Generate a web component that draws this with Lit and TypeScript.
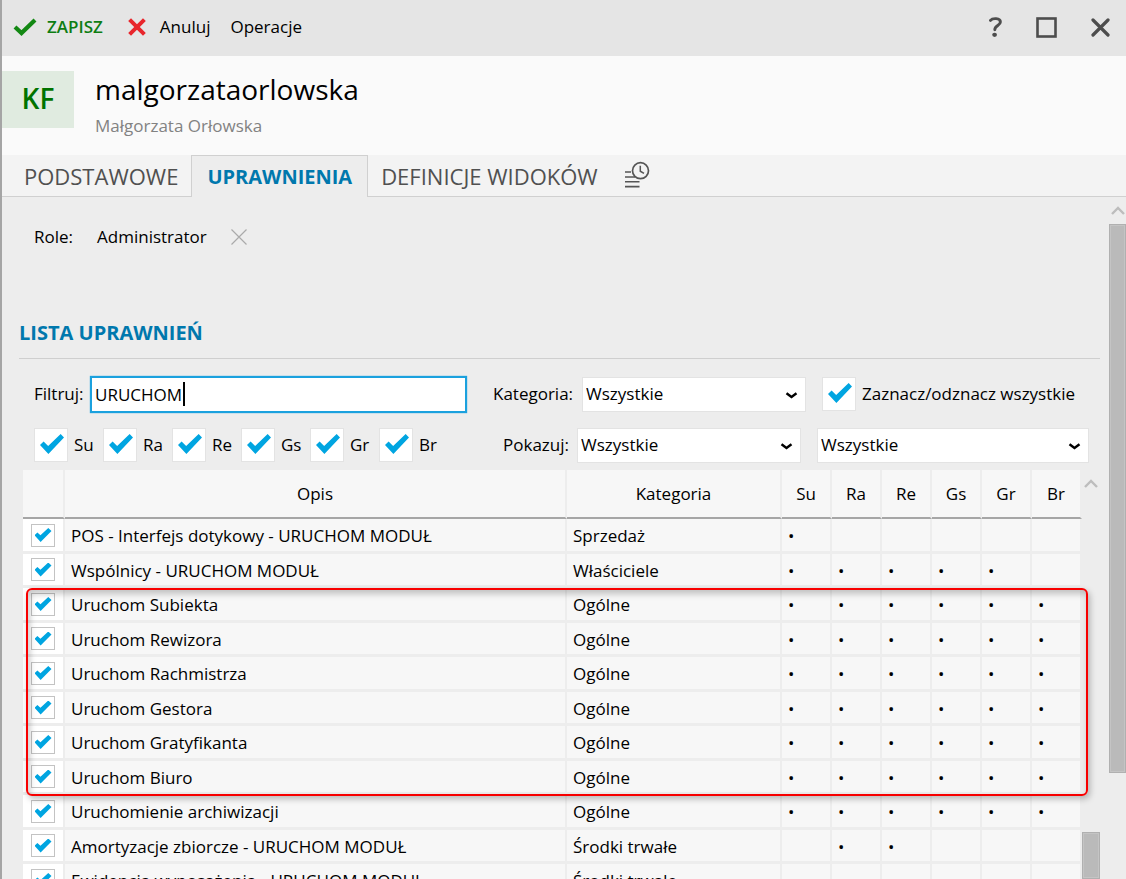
import { LitElement, html, css, svg } from "lit";
import { customElement, property, state } from "lit/decorators.js";

interface Permission {
  name: string;
  category: string;
  modules: string;
}

const MODULES = ["Su", "Ra", "Re", "Gs", "Gr", "Br"];

const PERMISSIONS: Permission[] = [
  { name: "POS - Interfejs dotykowy - URUCHOM MODUŁ", category: "Sprzedaż", modules: "Su" },
  { name: "Wspólnicy - URUCHOM MODUŁ", category: "Właściciele", modules: "Su Ra Re Gs Gr" },
  { name: "Uruchom Subiekta", category: "Ogólne", modules: "Su Ra Re Gs Gr Br" },
  { name: "Uruchom Rewizora", category: "Ogólne", modules: "Su Ra Re Gs Gr Br" },
  { name: "Uruchom Rachmistrza", category: "Ogólne", modules: "Su Ra Re Gs Gr Br" },
  { name: "Uruchom Gestora", category: "Ogólne", modules: "Su Ra Re Gs Gr Br" },
  { name: "Uruchom Gratyfikanta", category: "Ogólne", modules: "Su Ra Re Gs Gr Br" },
  { name: "Uruchom Biuro", category: "Ogólne", modules: "Su Ra Re Gs Gr Br" },
  { name: "Uruchomienie archiwizacji", category: "Ogólne", modules: "Su Ra Re Gs Gr Br" },
  { name: "Amortyzacje zbiorcze - URUCHOM MODUŁ", category: "Środki trwałe", modules: "Ra Re" },
  { name: "Ewidencja wyposażenia - URUCHOM MODUŁ", category: "Środki trwałe", modules: "" },
];

const controls = css`
  * {
    box-sizing: border-box;
  }
  button {
    display: inline-flex;
    align-items: center;
    padding: 0;
    border: 0;
    background: none;
    color: inherit;
    font: inherit;
  }
  svg {
    display: block;
    flex: none;
  }
  .tick {
    appearance: none;
    flex: none;
    display: grid;
    place-items: center;
    width: 34px;
    height: 34px;
    margin: 0;
    border: 1px solid #e3e3e3;
    background: #fff;
  }
  .tick:checked::before {
    content: "";
    width: 24px;
    height: 20px;
    margin: 0 0 2px 2px;
    background: #00a5e1;
    clip-path: polygon(0 55%, 15% 38%, 34% 60%, 86% 0, 100% 17%, 35% 100%);
  }
  .tick.small {
    width: 24px;
    height: 23px;
    border: 1px solid #c3c3c3;
  }
  .tick.small:checked::before {
    width: 17px;
    height: 14px;
    margin: 0;
    clip-path: polygon(0 52%, 17% 32%, 35% 51%, 81% 0, 100% 22%, 36% 100%);
  }
`;

@customElement("select-box")
export class SelectBox extends LitElement {
  @property() label = "";

  static styles = [
    controls,
    css`
      :host {
        display: block;
        position: relative;
        flex: none;
      }
      .select {
        appearance: none;
        display: block;
        width: 100%;
        height: 35px;
        padding: 0 32px 0 3px;
        border: 1px solid #e3e3e3;
        border-radius: 0;
        background: #fff;
        color: #000;
        font: inherit;
      }
      .arrow {
        position: absolute;
        right: 8px;
        top: 15px;
        pointer-events: none;
      }
    `,
  ];

  render() {
    return html`
      <select class="select" aria-label=${this.label}>
        <option>Wszystkie</option>
      </select>
      <svg class="arrow" width="13" height="8" viewBox="0 0 13 8">
        <path d="M1.5 1.2 L6.5 5 L11.5 1.2" fill="none" stroke="#000" stroke-width="2.4" />
      </svg>
    `;
  }
}

@customElement("app-root")
export class AppRoot extends LitElement {
  @state() private filter = "URUCHOM";

  static styles = [
    controls,
    css`
      :host {
        display: flex;
        flex-direction: column;
        height: 100vh;
        overflow: hidden;
        border-left: 2px solid #a5a5a5;
        box-sizing: border-box;
        background: #ededed;
        color: #000;
        font: 17px/24px "Open Sans", "Noto Sans", sans-serif;
      }
      .toolbar {
        display: flex;
        align-items: center;
        flex: none;
        height: 56px;
        padding: 0 16px 2px 11px;
        background: #e5e5e5;
      }
      .save {
        gap: 10px;
        margin-right: 25px;
        color: #0e7d12;
        font-weight: 600;
      }
      .cancel {
        gap: 14px;
        margin-right: 20px;
      }
      .window {
        display: flex;
        align-items: center;
        gap: 34px;
        margin-left: auto;
      }
      .heading {
        display: flex;
        flex: none;
        height: 99px;
        gap: 21px;
        padding-top: 15px;
        background: #fafafa;
      }
      .badge {
        display: grid;
        place-items: center;
        width: 72px;
        height: 57px;
        padding-bottom: 4px;
        background: #e0ebe0;
        color: #007300;
        font-size: 28px;
        font-weight: 600;
      }
      .login {
        margin: 0;
        font-size: 28px;
        line-height: 36px;
        font-weight: 400;
      }
      .person {
        margin: 7px 0 0;
        color: #828282;
      }
      .tabs {
        display: flex;
        flex: none;
        height: 42px;
        background: #f3f3f3;
        box-shadow: inset 0 -1px #d0d0d0;
        color: #505050;
        font-size: 22px;
      }
      .tab {
        padding: 0 13px;
      }
      .tab.first {
        padding-left: 22px;
      }
      .tab.active {
        padding: 0 15px;
        border: 1px solid #d0d0d0;
        border-bottom: 0;
        background: #ededed;
        color: #0078ad;
        font-size: 20px;
        font-weight: 700;
      }
      .tab.history {
        padding-bottom: 3px;
      }
      .body {
        display: flex;
        flex: 1;
        min-height: 0;
        gap: 9px;
      }
      .content {
        display: flex;
        flex-direction: column;
        flex: 1;
        min-width: 0;
        padding: 28px 0 0 17px;
      }
      .roles {
        display: flex;
        align-items: center;
        gap: 24px;
        height: 24px;
        padding-left: 15px;
      }
      .section {
        margin: 64px 0 0;
        padding: 6px 0 11px;
        border-bottom: 1px solid #cfcfcf;
        color: #0078ad;
        font-size: 20px;
        line-height: 28px;
        font-weight: 700;
      }
      .filters {
        display: flex;
        align-items: center;
        height: 36px;
        margin: 17px 11px 0 15px;
      }
      .filters.second {
        margin-top: 16px;
        height: 34px;
      }
      .search {
        display: flex;
        flex: 1;
        position: relative;
        margin: 0 26px 0 8px;
      }
      .text {
        flex: 1;
        min-width: 0;
        height: 37px;
        padding: 0 3px;
        border: 2px solid #1ba1de;
        outline: 0;
        background: #fff;
        box-shadow: 0 0 1px #1ba1de;
        color: #000;
        font: inherit;
        caret-color: transparent;
      }
      .caret {
        position: absolute;
        left: 93px;
        top: 6px;
        width: 2px;
        height: 24px;
        background: #000;
      }
      .label {
        flex: none;
        width: 48px;
      }
      .label.category {
        width: 89px;
      }
      .label.show {
        width: 74px;
      }
      .half {
        width: 224px;
        margin-right: 16px;
      }
      .wide {
        width: 272px;
      }
      .all {
        display: flex;
        align-items: center;
        gap: 6px;
        width: 267px;
      }
      .modules {
        display: flex;
        flex: 1;
      }
      .module {
        display: flex;
        align-items: center;
        gap: 6px;
        width: 69px;
      }
      .list {
        display: flex;
        flex: 1;
        min-height: 0;
        position: relative;
        margin-top: 8px;
        padding-left: 4px;
      }
      .rows {
        flex: 1;
        min-width: 0;
        overflow: hidden;
      }
      .table {
        width: 100%;
        table-layout: fixed;
        border-collapse: separate;
        border-spacing: 0;
      }
      .pick {
        width: 42px;
      }
      .kind {
        width: 215px;
      }
      .flag {
        width: 50px;
      }
      th {
        height: 49px;
        padding: 0;
        border-right: 2px solid #ededed;
        border-bottom: 2px solid #a6a6a6;
        background: #f7f7f7;
        font-weight: 400;
      }
      td {
        height: 35px;
        padding: 2px 6px 0;
        border-right: 2px solid #ededed;
        border-bottom: 3px solid #ededed;
        background: #f7f7f7;
        white-space: nowrap;
        line-height: 24px;
      }
      tr:nth-child(even) td {
        height: 34px;
      }
      td.box {
        padding: 0 8px;
        background: #fff;
      }
      .frame {
        position: absolute;
        left: 7px;
        right: 12px;
        top: 118px;
        height: 208px;
        border: 2px solid #f80000;
        border-radius: 6px;
        box-shadow: 2px 3px 6px rgba(0, 0, 0, 0.25), inset 2px 4px 6px rgba(0, 0, 0, 0.22);
        pointer-events: none;
      }
      .scroll {
        display: flex;
        flex-direction: column;
        align-items: center;
        flex: none;
        width: 18px;
        padding-top: 9px;
      }
      .scroll.page {
        width: 17px;
      }
      .thumb {
        width: 100%;
        border: 1px solid #b0b0b0;
        background: #bababa;
        box-shadow: inset 0 0 0 1px #c4c4c4;
      }
      .page .thumb {
        height: 549px;
        margin-top: 9px;
      }
      .list .thumb {
        flex: 1;
        margin-top: 344px;
      }
    `,
  ];

  private arrowUp() {
    return svg`<svg width="14" height="9" viewBox="0 0 14 9">
      <path d="M1 8 L7 2 L13 8" fill="none" stroke="#bdbdbd" stroke-width="2.4" />
    </svg>`;
  }

  private row(item: Permission) {
    const granted = item.modules.split(" ");
    return html`<tr>
      <td class="box"><input class="tick small" type="checkbox" aria-label=${item.name} checked /></td>
      <td>${item.name}</td>
      <td>${item.category}</td>
      ${MODULES.map((m) => html`<td>${granted.includes(m) ? "•" : ""}</td>`)}
    </tr>`;
  }

  render() {
    return html`
      <header class="toolbar">
        <button class="save">
          <svg width="24" height="18" viewBox="0 0 24 18">
            <path d="M2 9 L8.5 15 L22 2" fill="none" stroke="#138813" stroke-width="4.2" />
          </svg>
          ZAPISZ
        </button>
        <button class="cancel">
          <svg width="18" height="18" viewBox="0 0 18 18">
            <path d="M1.6 1.6 L16.4 16.4 M16.4 1.6 L1.6 16.4" stroke="#e8262c" stroke-width="4" />
          </svg>
          Anuluj
        </button>
        <button>Operacje</button>
        <div class="window">
          <button aria-label="Pomoc">
            <svg width="13" height="20" viewBox="0 0 13 20">
              <path
                d="M1.5 3.4 C3.4 .9 11.4 .6 11.4 5 C11.4 8.6 5.8 8.6 5.8 12.8"
                fill="none"
                stroke="#4d4d4d"
                stroke-width="2.9"
                stroke-linecap="round"
              />
              <ellipse cx="5.6" cy="17.8" rx="2.4" ry="2.1" fill="#4d4d4d" />
            </svg>
          </button>
          <button aria-label="Maksymalizuj">
            <svg width="21" height="21" viewBox="0 0 21 21">
              <rect x="1.5" y="1.5" width="18" height="18" fill="none" stroke="#4d4d4d" stroke-width="2.6" />
            </svg>
          </button>
          <button aria-label="Zamknij">
            <svg width="19" height="19" viewBox="0 0 19 19">
              <path
                d="M2 2 L17 17 M17 2 L2 17"
                stroke="#4d4d4d"
                stroke-width="3.2"
                stroke-linecap="round"
              />
            </svg>
          </button>
        </div>
      </header>

      <section class="heading">
        <div class="badge">KF</div>
        <div>
          <h1 class="login">malgorzataorlowska</h1>
          <p class="person">Małgorzata Orłowska</p>
        </div>
      </section>

      <nav class="tabs">
        <button class="tab first">PODSTAWOWE</button>
        <button class="tab active">UPRAWNIENIA</button>
        <button class="tab">DEFINICJE WIDOKÓW</button>
        <button class="tab history" aria-label="Historia">
          <svg width="26" height="27" viewBox="0 0 26 27" fill="none" stroke="#555">
            <path d="M1 11 H7 M1 16 H11 M1 20.8 H15.5 M1 25.6 H15.5" stroke-width="1.6" />
            <circle cx="16.5" cy="9.7" r="8" stroke-width="1.7" />
            <path d="M16.3 4.8 V10.2 L20 12.4" stroke-width="1.5" />
          </svg>
        </button>
      </nav>

      <main class="body">
        <div class="content">
          <div class="roles">
            <span>Role:</span>
            <span>Administrator</span>
            <button aria-label="Usuń rolę">
              <svg width="16" height="16" viewBox="0 0 16 16">
                <path d="M.5 .5 L15.5 15.5 M15.5 .5 L.5 15.5" stroke="#aaa" stroke-width="1.2" />
              </svg>
            </button>
          </div>

          <h2 class="section">LISTA UPRAWNIEŃ</h2>

          <div class="filters">
            <label class="label" for="filter">Filtruj:</label>
            <div class="search">
              <input
                class="text"
                id="filter"
                type="text"
                .value=${this.filter}
                @input=${(e: Event) => (this.filter = (e.target as HTMLInputElement).value)}
              />
              <span class="caret"></span>
            </div>
            <span class="label category">Kategoria:</span>
            <select-box class="half" label="Kategoria"></select-box>
            <label class="all"><input class="tick" type="checkbox" checked />Zaznacz/odznacz wszystkie</label>
          </div>

          <div class="filters second">
            <div class="modules">
              ${MODULES.map(
                (m) => html`<label class="module"><input class="tick" type="checkbox" checked />${m}</label>`
              )}
            </div>
            <span class="label show">Pokazuj:</span>
            <select-box class="half" label="Pokazuj"></select-box>
            <select-box class="wide" label="Pokazuj uprawnienia"></select-box>
          </div>

          <div class="list">
            <div class="rows">
              <table class="table">
                <thead>
                  <tr>
                    <th class="pick"></th>
                    <th>Opis</th>
                    <th class="kind">Kategoria</th>
                    ${MODULES.map((m) => html`<th class="flag">${m}</th>`)}
                  </tr>
                </thead>
                <tbody>
                  ${PERMISSIONS.map((p) => this.row(p))}
                </tbody>
              </table>
            </div>
            <div class="scroll">
              ${this.arrowUp()}
              <div class="thumb"></div>
            </div>
            <div class="frame"></div>
          </div>
        </div>
        <div class="scroll page">
          ${this.arrowUp()}
          <div class="thumb"></div>
        </div>
      </main>
    `;
  }
}
